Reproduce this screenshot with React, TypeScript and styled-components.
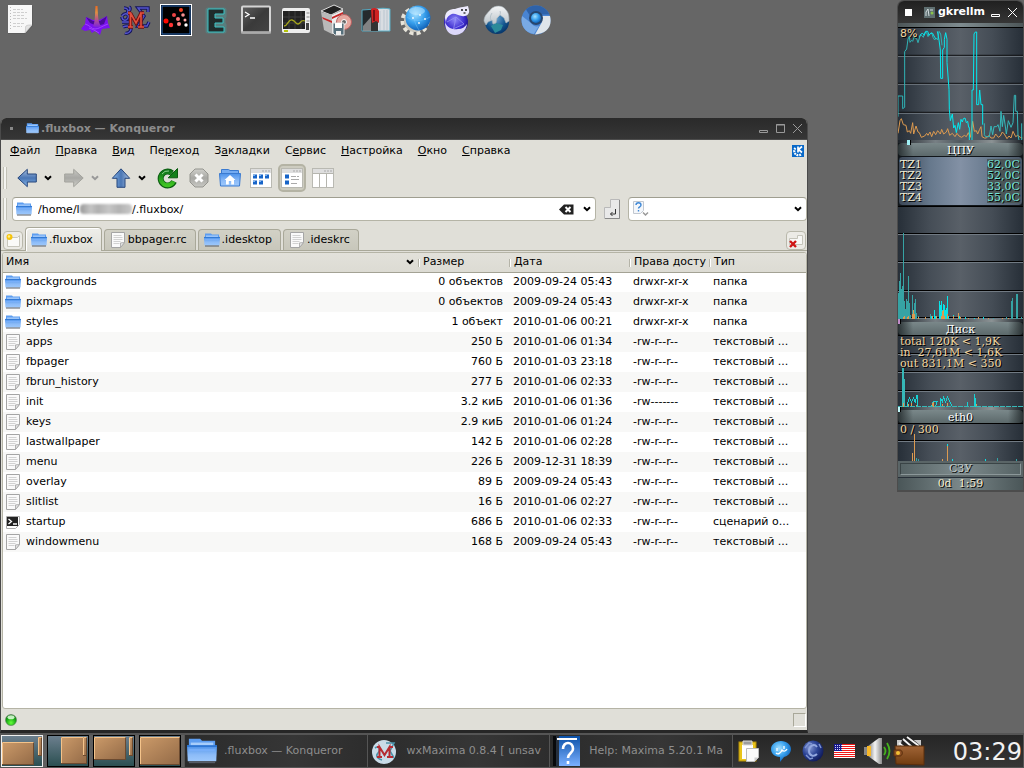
import React from 'react';
import styled, { createGlobalStyle } from 'styled-components';

const sans = '"DejaVu Sans", "Liberation Sans", sans-serif';
const serif = '"DejaVu Serif", "Liberation Serif", serif';

const GlobalStyle = createGlobalStyle`
  * { box-sizing: border-box; }
  body {
    margin: 0;
    background: #666;
    font: 11px/14px ${sans};
    color: #000;
    overflow: hidden;
  }
  button, input { font: inherit; color: inherit; }
  button { border: 0; padding: 0; margin: 0; background: none; }
  svg { display: block; flex: none; }
`;

/* ---------- desktop ---------- */

const Desktop = styled.div`
  position: relative;
  display: flex;
  flex-direction: column;
  justify-content: space-between;
  min-height: 100vh;
`;
const IconBar = styled.nav`
  display: flex;
  gap: 44px;
  padding: 4px;
`;
const IconGroup = styled.div`
  display: flex;
  gap: 8px;
`;
const DesktopButton = styled.button`
  width: 32px;
  height: 32px;
`;

/* ---------- file manager window ---------- */

const Window = styled.main`
  position: absolute;
  left: 0;
  top: 118px;
  right: 216px;
  bottom: 35px;
  display: flex;
  flex-direction: column;
  background: #e0dfd8;
  border: solid #4a4a4a;
  border-width: 0 1px 0 1px;
  border-bottom: 3px solid #262626;
  border-radius: 6px 6px 0 0;
  overflow: hidden;
`;
const TitleBar = styled.header`
  display: flex;
  align-items: center;
  height: 22px;
  padding: 0 1px 0 9px;
  background: linear-gradient(#2a2a2a, #363636);
  border-bottom: 1px solid #4c4c4c;
  color: #8c8c8c;
  font-weight: bold;
`;
const TitleDot = styled.span`
  width: 3px;
  height: 3px;
  margin-right: 13px;
  background: #888;
`;
const TitleText = styled.h1`
  flex: 1;
  margin: 0;
  padding-left: 2px;
  font-size: 11px;
  white-space: nowrap;
`;
const TitleButton = styled.button`
  display: flex;
  justify-content: center;
  width: 17px;
`;
const MenuBar = styled.nav`
  display: flex;
  align-items: center;
  gap: 1px;
  height: 21px;
  padding: 0 3px 0 2px;
`;
const MenuItem = styled.button`
  padding: 0 7px;
  white-space: nowrap;
`;
const Spacer = styled.span`
  flex: 1;
`;
const ToolBar = styled.div`
  display: flex;
  align-items: center;
  gap: 3px;
  height: 34px;
  padding-left: 2px;
`;
const Handle = styled.span<{ $h: number }>`
  width: 4px;
  height: ${p => p.$h}px;
  margin-right: 5px;
  border: solid #c2c1b6;
  border-width: 0 1px;
  background: #f4f4f0;
`;
const SplitTools = styled.div`
  display: flex;
  gap: 5px;
`;
const SplitTool = styled.div`
  display: flex;
`;
const ToolButton = styled.button<{ $w: number; $pressed?: boolean }>`
  display: flex;
  align-items: center;
  justify-content: center;
  width: ${p => p.$w}px;
  height: 28px;
  border-radius: 5px;
  border: ${p => (p.$pressed ? '2px solid #b4b3a4' : '0')};
  background: ${p => (p.$pressed ? '#cdccc0' : 'transparent')};
`;
const LocationBar = styled.div`
  display: flex;
  align-items: center;
  gap: 8px;
  height: 30px;
  padding: 0 0 2px 2px;
`;
const Field = styled.div<{ $w?: number }>`
  position: relative;
  display: flex;
  align-items: center;
  flex: ${p => (p.$w ? `0 0 ${p.$w}px` : '1')};
  min-width: 0;
  height: 24px;
  padding: 0 3px;
  background: #fff;
  border: 1px solid #b5b4a6;
  border-top-color: #9f9e90;
  border-radius: 4px;
`;
const LocationField = styled(Field)`
  margin-left: -8px;
`;
const TextInput = styled.input`
  flex: 1;
  width: 0;
  min-width: 0;
  height: 16px;
  padding: 0 0 0 6px;
  border: 0;
  outline: 0;
  background: none;
`;
const Smudge = styled.span`
  position: absolute;
  left: 67px;
  top: 6px;
  width: 52px;
  height: 10px;
  border-radius: 4px;
  background: linear-gradient(90deg, #999, #c4c4c4 20%, #b0b0b0 35%, #c6c6c6 55%, #b2b2b2 75%, #c8c8c8);
  filter: blur(1px);
`;
const FieldButton = styled.button`
  display: flex;
  align-items: center;
  justify-content: center;
  width: 20px;
  height: 18px;
`;
const DropButton = styled(FieldButton)`
  width: 10px;
  margin-left: 6px;
`;
const TabStrip = styled.div`
  display: flex;
  align-items: flex-end;
  gap: 2px;
  height: 26px;
  padding: 0 1px 0 2px;
  border-bottom: 1px solid #a9a899;
`;
const CornerButton = styled.button`
  display: flex;
  align-items: center;
  justify-content: center;
  width: 20px;
  height: 19px;
  border: 1px solid #b9b8ab;
  border-radius: 4px;
  background: #ecebe6;
`;
const Tab = styled.button<{ $active?: boolean }>`
  display: flex;
  align-items: center;
  gap: 2px;
  height: ${p => (p.$active ? 24 : 21)}px;
  margin-bottom: ${p => (p.$active ? -1 : 0)}px;
  padding: 0 8px 0 5px;
  border: 1px solid #a9a899;
  border-bottom: 0;
  border-radius: 4px 4px 0 0;
  background: ${p => (p.$active ? 'linear-gradient(#eeeeea, #e0dfd8)' : 'linear-gradient(#d2d1c6, #c8c7bb)')};
  box-shadow: ${p => (p.$active ? 'inset 1px 1px 0 #fff' : 'none')};
  white-space: nowrap;
`;
const ListFrame = styled.section`
  flex: 1;
  min-height: 0;
  margin: 1px 0 0 1px;
  overflow: hidden;
  background: #fff;
  border: 1px solid #b5b4a6;
  border-radius: 3px;
`;
const FileTable = styled.table`
  width: 100%;
  table-layout: fixed;
  border-collapse: collapse;
`;
const HeadCell = styled.th`
  position: relative;
  height: 19px;
  padding: 0 0 0 5px;
  background: linear-gradient(#e2e1da, #dcdbd3);
  border-bottom: 1px solid #a3a294;
  font-weight: normal;
  text-align: left;
  white-space: nowrap;
  & + &::before {
    content: '';
    position: absolute;
    left: 0;
    top: 6px;
    height: 8px;
    border-left: 1px solid #b5b4a8;
    border-right: 1px solid #fff;
  }
`;
const FirstHead = styled(HeadCell)`
  padding-left: 3px;
`;
const HeadInner = styled.div`
  display: flex;
  align-items: center;
  justify-content: space-between;
  padding-right: 4px;
`;
const Row = styled.tr`
  height: 20px;
  &:nth-child(even) { background: #f8f8f7; }
`;
const Cell = styled.td<{ $right?: boolean }>`
  padding: 0 ${p => (p.$right ? 6 : 0)}px 0 4px;
  text-align: ${p => (p.$right ? 'right' : 'left')};
  white-space: nowrap;
`;
const NameCell = styled(Cell)`
  padding-left: 2px;
`;
const FileName = styled.div`
  display: flex;
  align-items: center;
  gap: 5px;
`;
const StatusBar = styled.footer`
  display: flex;
  align-items: center;
  justify-content: space-between;
  height: 21px;
  padding: 0 1px 0 4px;
`;
const Grip = styled.span`
  width: 13px;
  height: 14px;
  border: 1px solid;
  border-color: #a9a899 #fff #fff #a9a899;
`;

/* ---------- system monitor ---------- */

const Monitor = styled.aside`
  position: absolute;
  right: 0;
  top: 0;
  width: 127px;
  border: solid #4c4c4c;
  border-width: 1px 1px 2px 1px;
  border-radius: 7px 7px 0 0;
  overflow: hidden;
  font: 11px/11px ${serif};
  color: #f0f0f0;
`;
const MonitorTitle = styled.header`
  display: flex;
  align-items: center;
  height: 22px;
  padding: 0 2px 0 7px;
  background: linear-gradient(#202020, #363636);
  font: bold 11px/14px ${sans};
  color: #fff;
`;
const MonitorName = styled.span`
  flex: 1;
  padding-left: 3px;
`;
const WhiteSquare = styled.span`
  width: 7px;
  height: 7px;
  margin-right: 12px;
  background: #fff;
`;
const Band = styled.div`
  height: 4px;
  background: linear-gradient(90deg, #4d5658, #7f8c90, #4d5658);
`;
const ChartBox = styled.div<{ $h: number }>`
  position: relative;
  height: ${p => p.$h}px;
  overflow: hidden;
  border-top: 1px solid #000;
  background: linear-gradient(90deg, #272f38, #454d56 25%, #596068 50%, #454d56 75%, #272f38);
`;
const ChartText = styled.div`
  position: absolute;
  left: 2px;
  top: 0;
  color: #f3d6a0;
  text-shadow: 1px 1px 0 #000;
  white-space: pre;
`;
const CpuText = styled(ChartText)`
  font-family: ${sans};
`;
const Krell = styled.div<{ $mark: string; $at: number }>`
  position: relative;
  height: 3px;
  background: linear-gradient(90deg, #1d2228, #777f84 30%, #50585e 50%, #8b9294 75%, #1d2228);
  &::after {
    content: '';
    position: absolute;
    left: ${p => p.$at}px;
    top: 0;
    width: 3px;
    height: 5px;
    background: ${p => p.$mark};
    border-right: 1px solid #000;
    z-index: 1;
  }
`;
const Label = styled.div`
  height: 13px;
  padding-top: 2px;
  border-radius: 4px;
  background: linear-gradient(90deg, #2b3335, transparent 12%, transparent 88%, #2b3335), linear-gradient(#7a888a, #5c696b);
  text-align: center;
  text-shadow: 1px 1px 0 #000;
  color: #fff;
`;
const LabelRow = styled.div`
  background: #11161a;
`;
const Sensors = styled.dl`
  display: grid;
  grid-template-columns: 1fr auto;
  margin: 0;
  height: 50px;
  padding: 2px 2px 2px 1px;
  border: 1px solid #11161a;
  border-radius: 4px;
  background: linear-gradient(90deg, #3c4756, #66788c 25%, #8391a5 50%, #66788c 75%, #4b5766);
  text-shadow: 1px 1px 0 #000;
`;
const SensorName = styled.dt`
  color: #f1ecd3;
`;
const SensorValue = styled.dd`
  margin: 0;
  background: #4a5556;
  color: #72e6dc;
`;
const MemBox = styled.div`
  padding: 2px;
  background: #5a6567;
  border-bottom: 1px solid #272f38;
`;
const MemLabel = styled.div`
  height: 12px;
  border: 1px solid;
  border-color: #3a4446 #8b9799 #8b9799 #3a4446;
  background: linear-gradient(90deg, #566365, #7e8b8d, #566365);
  text-align: center;
  line-height: 10px;
  color: #c2cdcd;
  text-shadow: 1px 1px 0 #000;
`;
const Uptime = styled.div`
  height: 12px;
  background: linear-gradient(90deg, #4a5658, #7a8789 50%, #4a5658);
  text-align: center;
  color: #f3ead0;
  text-shadow: 1px 1px 0 #000;
  white-space: pre;
`;

/* ---------- task bar ---------- */

const TaskBar = styled.footer`
  display: flex;
  height: 35px;
  border: solid #555;
  border-width: 2px 1px 1px 1px;
  background: #2f2f2f;
`;
const Pager = styled.div`
  display: flex;
  gap: 4px;
  padding-right: 3px;
  background: #606060;
`;
const PagerButton = styled.button<{ $current?: boolean }>`
  width: 42px;
  height: 32px;
  border: 1px solid ${p => (p.$current ? '#f0f0f0' : '#000')};
  background: linear-gradient(#6c7f8e, #2b4f51);
`;
const Tasks = styled.div`
  display: flex;
  flex: 1;
  min-width: 0;
`;
const Task = styled.button`
  display: flex;
  align-items: center;
  flex: 1;
  min-width: 0;
  padding: 0 7px 0 2px;
  gap: 7px;
  border-left: 1px solid #555;
  background: linear-gradient(90deg, #2b2b2b, #363636 60%, #2d2d2d);
  color: #8e8e8e;
`;
const TaskText = styled.span`
  white-space: nowrap;
`;
const Tray = styled.div`
  display: flex;
  align-items: center;
  border-left: 1px solid #555;
  background: linear-gradient(#262626, #363636);
`;
const TrayButton = styled.button`
  display: flex;
  align-items: center;
  justify-content: center;
  width: 32px;
  height: 32px;
`;
const Clock = styled.time`
  padding: 2px 1px 0 28px;
  font-size: 24px;
  line-height: 30px;
  color: #f2f2f2;
`;

/* ---------- shared gradients ---------- */

const HiddenSvg = styled.svg`
  position: absolute;
`;
const Defs = () => (
  <HiddenSvg width="0" height="0" aria-hidden="true">
    <defs>
      <linearGradient id="folder" x1="0" y1="0" x2="0" y2="1"><stop offset="0" stopColor="#4c92ea" /><stop offset=".6" stopColor="#8dbcf8" /><stop offset="1" stopColor="#9cc8fc" /></linearGradient>
      <linearGradient id="arrow" x1="0" y1="0" x2="0" y2="1"><stop offset="0" stopColor="#a7bfdf" /><stop offset=".5" stopColor="#4a76b4" /><stop offset="1" stopColor="#86b6ea" /></linearGradient>
      <linearGradient id="grayArrow" x1="0" y1="0" x2="0" y2="1"><stop offset="0" stopColor="#cfcfca" /><stop offset=".5" stopColor="#a8a8a4" /><stop offset="1" stopColor="#c8c8c3" /></linearGradient>
      <linearGradient id="green" x1="0" y1="0" x2="0" y2="1"><stop offset="0" stopColor="#10751a" /><stop offset="1" stopColor="#3fc422" /></linearGradient>
      <linearGradient id="peak" x1="0" y1="0" x2="0" y2="1"><stop offset="0" stopColor="#f06a20" /><stop offset=".3" stopColor="#e09040" /><stop offset=".55" stopColor="#c0607a" /><stop offset="1" stopColor="#7a20e0" /></linearGradient>
      <linearGradient id="wood" x1="0" y1="0" x2="1" y2="1"><stop offset="0" stopColor="#cb9a69" /><stop offset="1" stopColor="#936a47" /></linearGradient>
      <linearGradient id="wallet" x1="0" y1="0" x2="0" y2="1"><stop offset="0" stopColor="#a06436" /><stop offset="1" stopColor="#703c10" /></linearGradient>
      <linearGradient id="metal" x1="0" y1="0" x2="1" y2="0"><stop offset="0" stopColor="#7a7a7a" /><stop offset=".5" stopColor="#f4f4f4" /><stop offset="1" stopColor="#8c8c8c" /></linearGradient>
      <linearGradient id="help" x1="0" y1="0" x2="0" y2="1"><stop offset="0" stopColor="#0b51a8" /><stop offset="1" stopColor="#7ab0ff" /></linearGradient>
      <linearGradient id="screen" x1="0" y1="0" x2="1" y2="1"><stop offset="0" stopColor="#606060" /><stop offset=".5" stopColor="#3a3a3a" /><stop offset="1" stopColor="#444" /></linearGradient>
      <linearGradient id="fur" x1="0" y1="0" x2="0" y2="1"><stop offset="0" stopColor="#f4f5f6" /><stop offset="1" stopColor="#b8c2c8" /></linearGradient>
      <radialGradient id="sky" cx=".4" cy=".35" r=".7"><stop offset="0" stopColor="#a4e0ff" /><stop offset=".5" stopColor="#3aa2ee" /><stop offset="1" stopColor="#0b5cb4" /></radialGradient>
      <radialGradient id="violet" cx=".45" cy=".4" r=".65"><stop offset="0" stopColor="#8f88f8" /><stop offset=".6" stopColor="#3e2ed0" /><stop offset="1" stopColor="#160a78" /></radialGradient>
      <radialGradient id="earth" cx=".45" cy=".35" r=".7"><stop offset="0" stopColor="#6ba5d0" /><stop offset=".6" stopColor="#12558e" /><stop offset="1" stopColor="#052f62" /></radialGradient>
      <radialGradient id="navy" cx=".35" cy=".35" r=".75"><stop offset="0" stopColor="#8498d4" /><stop offset=".5" stopColor="#2a4294" /><stop offset="1" stopColor="#0c1450" /></radialGradient>
      <radialGradient id="led" cx=".5" cy=".75" r=".7"><stop offset="0" stopColor="#66ff3c" /><stop offset=".7" stopColor="#10a010" /><stop offset="1" stopColor="#087008" /></radialGradient>
    </defs>
  </HiddenSvg>
);

/* ---------- icons ---------- */

const Folder = ({ size = 16 }: { size?: number }) => (
  <svg width={size} height={size} viewBox="0 0 16 16">
    <path d="M1 1.500h6l1 1h7v5H1z" fill="#5d9df0" />
    <path d="M2 3.500h12v2H2z" fill="#a7cdfb" />
    <path d="M0 5h16l-.4 8.500H.4z" fill="url(#folder)" />
    <path d="M0 5.400h16" stroke="#2f77d4" />
    <path d="M1.200 7.500h13.600" stroke="#78affa" />
    <path d="M1 14h14" stroke="#565c66" />
  </svg>
);
const Page = () => (
  <svg width="16" height="16" viewBox="0 0 16 16">
    <path d="M1.500.5h13v10l-4 5h-9z" fill="#fafafa" stroke="#a5a5a5" />
    <path d="M3.500 3.500h8M3.500 5.500h9M3.500 7.500h9M3.500 9.500h7M3.500 11.500h6" stroke="#d2d2d2" />
    <path d="M14.500 10.500l-4 .4v4.600z" fill="#e4e4e4" stroke="#a5a5a5" strokeWidth=".8" />
  </svg>
);
const Document = () => (
  <svg width="32" height="32" viewBox="0 0 32 32">
    <path d="M4 2h25v20l-8 8H4z" fill="#4a4a4a" opacity=".35" />
    <path d="M4 1h24v20l-7 8H4z" fill="#f7f7f7" />
    <path d="M9 5.500h10M9 8.500h14M9 11.500h12M9 14.500h14M9 19.500h12M9 22.500h9" stroke="#cfcfcf" strokeDasharray="3 1" />
    <path d="M6.500 3v24" stroke="#bbb" strokeDasharray="1 2" />
    <path d="M28 21c-3 0-5 0-6 1s0 4-1 7z" fill="#e3e3e3" stroke="#bbb" strokeWidth=".6" />
  </svg>
);
const Script = () => (
  <svg width="16" height="16" viewBox="0 0 16 16">
    <path d="M1.500 2.500h13v8l-4 4h-9z" fill="#fff" stroke="#aaa" />
    <rect x="2" y="3" width="11" height="9" fill="#222" />
    <path d="M3.500 5l3 2.500-3 2.500M8 10h4" fill="none" stroke="#fff" strokeWidth="1.300" />
  </svg>
);
const Chevron = ({ color = '#000' }: { color?: string }) => (
  <svg width="8" height="6" viewBox="0 0 8 6"><path d="M1 1.200l3 3 3-3" fill="none" stroke={color} strokeWidth="2" /></svg>
);
const Arrow = ({ turn = 0, gray = false }: { turn?: number; gray?: boolean }) => (
  <svg width="20" height="20" viewBox="0 0 20 20">
    <path d="M.8 10L10.300 1.300V6h9v8h-9v4.700z" transform={`rotate(${turn} 10 10)`} fill={gray ? 'url(#grayArrow)' : 'url(#arrow)'} stroke={gray ? '#a2a29c' : '#27467c'} strokeLinejoin="round" />
  </svg>
);
const Reload = () => (
  <svg width="22" height="22" viewBox="0 0 22 22">
    <path d="M17 14.500a7 7 0 1 1-2-8.500" fill="none" stroke="#0a5c10" strokeWidth="6" />
    <path d="M20.500 1.500v9.300h-9.300z" fill="#12801a" stroke="#0a5c10" />
    <path d="M16.600 14.300a6.800 6.800 0 1 1-1.600-8" fill="none" stroke="url(#green)" strokeWidth="4.200" />
    <path d="M5 7a7 7 0 0 1 7-3" fill="none" stroke="#8fd48c" strokeWidth="1" />
  </svg>
);
const Stop = () => (
  <svg width="20" height="20" viewBox="0 0 20 20">
    <path d="M6 1h8l5 5v8l-5 5H6l-5-5V6z" fill="url(#grayArrow)" stroke="#95958f" />
    <path d="M6.500 6.500l7 7m0-7l-7 7" stroke="#fff" strokeWidth="3" />
  </svg>
);
const Home = () => (
  <svg width="22" height="20" viewBox="0 0 22 20">
    <path d="M2.500 1.500h7l1.500 1h8.500V9h-17z" fill="#74abf1" stroke="#3a7ad0" />
    <path d="M.5 5.500h21L20.500 18h-19z" fill="url(#folder)" stroke="#3a7ad0" />
    <path d="M11 7l5.500 5H15v4.500h-2.800V13H9.800v3.500H7V12H5.500z" fill="#fff" />
  </svg>
);
const ViewIcon = ({ kind }: { kind: 'icons' | 'tree' | 'columns' }) => (
  <svg width="22" height="20" viewBox="0 0 22 20">
    <rect x=".5" y=".5" width="21" height="19" fill="#fff" stroke="#b9b9b2" />
    <path d="M1 3h20" stroke="#dedede" strokeWidth="4" />
    <path d="M12 3h2m1 0h2m1 0h2" stroke="#aaa" />
    {kind === 'icons' && <path d="M3 8.500h4m2 0h4m2 0h4M3 14.500h4m2 0h4" stroke="#1764c8" strokeWidth="4" />}
    {kind === 'icons' && <path d="M3 7.500h2m4 0h2m4 0h2M3 13.500h2m4 0h2" stroke="#7ab3f2" />}
    {kind === 'tree' && <path d="M4 8.500h4M4 14.500h4" stroke="#1764c8" strokeWidth="4" />}
    {kind === 'tree' && <path d="M10 8.500h5m1 0h2M10 11.500h8M10 15.500h6" stroke="#aaa" />}
    {kind === 'columns' && <path d="M7.500 5v14M14.500 5v14M1 5.500h20" stroke="#b5b5ae" />}
  </svg>
);
const ClearIcon = () => (
  <svg width="15" height="11" viewBox="0 0 15 11">
    <path d="M0 5.500L5 .5h9.500v10H5z" fill="#222" />
    <path d="M6.500 3l5 5m0-5l-5 5" stroke="#fff" strokeWidth="2" />
  </svg>
);
const GoIcon = () => (
  <svg width="16" height="20" viewBox="0 0 16 20">
    <path d="M6.500.5h9v19H.5v-11h6z" fill="#e9e9e9" stroke="#b9b9b9" />
    <path d="M15.500 1v18.500H1" fill="none" stroke="#888" />
    <path d="M11.500 10v5h-5M8.500 13l-2 2 2 2" fill="none" stroke="#333" />
  </svg>
);
const QueryIcon = () => (
  <svg width="17" height="16" viewBox="0 0 17 16">
    <path d="M1.500.5h10v9l-3 3h-7z" fill="#f4f7fb" stroke="#c2c8d0" />
    <path d="M4 4c0-3 5-3 5 0 0 2-2.500 1.700-2.500 3.500M6.500 9v1.500" fill="none" stroke="#3f88d6" strokeWidth="1.400" />
    <path d="M11 11.500l2.500 2.500 2.500-2.500" fill="none" stroke="#999" strokeWidth="1.500" />
  </svg>
);
const KdeIcon = () => (
  <svg width="12" height="12" viewBox="0 0 12 12">
    <rect width="12" height="12" fill="#0868c8" />
    <path d="M3.500 3a4 4 0 0 0 6 6" fill="none" stroke="#fff" strokeWidth="2.200" strokeDasharray="1.800 .8" />
    <path d="M6 1.500v6M10 1.500L6.500 4.500 10 7.500" fill="none" stroke="#fff" strokeWidth="1.700" />
  </svg>
);
const NewTabIcon = () => (
  <svg width="16" height="15" viewBox="0 0 16 15">
    <path d="M2.500 4.500h10l2-2v11h-12z" fill="#fafaf8" stroke="#c8c7bd" />
    <circle cx="4.500" cy="4" r="3" fill="#f6c40c" /><circle cx="4" cy="3.500" r="1.200" fill="#fff08a" />
  </svg>
);
const CloseTabIcon = () => (
  <svg width="16" height="15" viewBox="0 0 16 15">
    <path d="M1.500 5.500h8v-3h5v9h-13z" fill="#f8f8f6" stroke="#c5c4ba" />
    <path d="M2 8l6 6m0-6l-6 6" stroke="#cf1515" strokeWidth="2.400" />
  </svg>
);
const Minimize = ({ color = '#999' }: { color?: string }) => (
  <svg width="11" height="11" viewBox="0 0 11 11"><path d="M1.500 7.500h8v2h-8z" fill="none" stroke={color} /></svg>
);
const Maximize = () => (
  <svg width="11" height="11" viewBox="0 0 11 11"><path d="M1.500 1.500h8v8h-8zM1 2h9" fill="none" stroke="#999" /></svg>
);
const Cross = ({ color = '#999' }: { color?: string }) => (
  <svg width="11" height="11" viewBox="0 0 11 11"><path d="M1 1l9 9m0-9l-9 9" stroke={color} /></svg>
);
const Led = () => (
  <svg width="12" height="12" viewBox="0 0 12 12">
    <circle cx="6" cy="6" r="5.500" fill="url(#led)" stroke="#5a7a5a" strokeWidth=".6" />
    <ellipse cx="6" cy="3.200" rx="3.500" ry="2" fill="#e4ffe0" opacity=".85" />
  </svg>
);

const Art = ({ children }: { children: React.ReactNode }) => (
  <svg width="32" height="32" viewBox="0 0 32 32">{children}</svg>
);
const desktopIcons: { name: string; art: React.ReactNode }[] = [
  { name: 'Surface plot', art: <>
    <path d="M1 25l4-5 1-7 7 3h6l8-4 1 7 2 5-8 1-2 6-5-4-3 2-2-3-5 1z" fill="#7a12f0" />
    <path d="M6 13l7 4h7l7-5-3 8-7 2-7-3z" fill="#4a0a9c" />
    <path d="M13 22c2-3 2-12 2.500-20h2c.500 8 .500 17 3.500 20-3 2-5 2-8 0z" fill="url(#peak)" />
    <path d="M5 20c5 1 6 5 10 5s7-3 13-5M9 24l5 2 5 3" fill="none" stroke="#a040ff" />
  </> },
  { name: 'Maxima', art: <>
    <path d="M4 4c4 0 5 3 3 5M9 3c2 1 1 4-1 5M2 12c3-4 8-2 6 2s-6 2-6-1M2 18h9M3 23c4-2 8-1 8 2s-4 5-6 4M28 8V4H18l6 8-6 10h9l2-4" fill="none" stroke="#15155f" strokeWidth="3.400" />
    <path d="M4 4c4 0 5 3 3 5M9 3c2 1 1 4-1 5M2 12c3-4 8-2 6 2s-6 2-6-1M2 18h9M3 23c4-2 8-1 8 2s-4 5-6 4M28 8V4H18l6 8-6 10h9l2-4" fill="none" stroke="#5656cc" strokeWidth="1.400" />
    <path d="M8 23h5M10.500 23V9l5.500 10 5-10v14M18 23h6M8 9h3M20 9h4" fill="none" stroke="#701010" strokeWidth="3.400" />
    <path d="M8 23h5M10.500 23V9l5.500 10 5-10v14M18 23h6M8 9h3M20 9h4" fill="none" stroke="#e2503e" strokeWidth="1.600" />
  </> },
  { name: 'Scatter plot', art: <>
    <rect x=".5" y=".5" width="31" height="31" fill="#000" stroke="#fff" />
    <rect x="2" y="2" width="28" height="28" fill="#000" stroke="#2f6fc0" />
    <circle cx="6" cy="17" r="2.500" fill="#ff0800" /><circle cx="11" cy="21" r="2.200" fill="#f33" /><circle cx="14" cy="11" r="2" fill="#e44" /><circle cx="18" cy="15" r="2" fill="#f77" /><circle cx="19" cy="20" r="2" fill="#f88" /><circle cx="21" cy="6" r="2" fill="#f74020" /><circle cx="23" cy="11" r="1.800" fill="#f89090" /><circle cx="25" cy="16" r="1.500" fill="#faa" /><circle cx="26" cy="21" r="1.700" fill="#fff" />
  </> },
  { name: 'Emacs', art: <>
    <path d="M8 6h16v6H15v2h8v5h-8v2h9v6H8z" fill="#38aeb0" stroke="#38b6b8" strokeWidth="5" opacity=".3" strokeLinejoin="round" />
    <path d="M8 5h16v5H15v4h8v5h-8v4h9v5H8z" fill="#202a2a" stroke="#3bc4c6" strokeWidth="1" />
  </> },
  { name: 'Terminal', art: <>
    <rect x="2" y="2.500" width="28" height="26" rx="1" fill="url(#screen)" stroke="#d4d4d4" strokeWidth="2" />
    <path d="M1 28.500h30" stroke="#aaa" strokeWidth="2" />
    <path d="M5 8l4 2.500L5 13M10 14h5" fill="none" stroke="#fff" strokeWidth="1.300" />
  </> },
  { name: 'System monitor', art: <>
    <rect x="2" y="4" width="28" height="25" rx="2" fill="#ededed" />
    <rect x="3" y="7" width="22" height="18" fill="#222" />
    <path d="M3 13h22M3 19h22M9 7v18M15 7v18M21 7v18" stroke="#3d3d3d" />
    <path d="M4 22c4 0 4-7 8-6s3 4 6 4 2-5 7-3" fill="none" stroke="#a5a51c" strokeWidth="1.300" />
    <path d="M4 27h4" stroke="#b5c40a" strokeWidth="2" /><path d="M26.500 9h3m-3 4h3m-3 4h3" stroke="#888" /><rect x="26" y="19" width="3" height="7" fill="#444" />
  </> },
  { name: 'Package manager', art: <>
    <path d="M1 7l13-6 9 4-12 6z" fill="#222" stroke="#ddd" /><path d="M1 8l3 18 8 4 1-19z" fill="#b9b9b9" />
    <path d="M12 11l11-5v18l-11 6z" fill="#eee" /><path d="M2 13l10 4v2L3 15zM12 13l11-5v2l-11 5z" fill="#c82525" />
    <circle cx="24" cy="18" r="7.500" fill="#e6a8a0" stroke="#b86060" /><circle cx="24" cy="18" r="2.500" fill="#666" stroke="#fff" />
    <path d="M13 19h11v12H15l-2-2z" fill="#56707c" stroke="#ddd" /><rect x="15" y="19" width="7" height="5" fill="#fff" /><rect x="16" y="27" width="5" height="4" fill="#eee" />
  </> },
  { name: 'Dictionary', art: <>
    <path d="M2 6l14-1v22H2z" fill="#252a2d" stroke="#56a8c0" /><path d="M16 5c5-1 9-1 14 0v22H16z" fill="#d9dde2" stroke="#5ab0c8" />
    <path d="M11 5h7v22h-7z" fill="#333" /><path d="M11 5c3-2 7-1 8 2v12l-3-2-4 2z" fill="#d02222" /><path d="M14 6v11" stroke="#7c1014" strokeWidth="2" /><path d="M3 22l8-9v14H3z" fill="#999" opacity=".8" /><path d="M20 7v19M24 6v20M27 6v20" stroke="#b9c5cf" />
  </> },
  { name: 'Konqueror', art: <>
    <circle cx="15" cy="17" r="12.500" fill="none" stroke="#e7e4da" strokeWidth="4" strokeDasharray="4 3" /><circle cx="15" cy="17" r="11" fill="#cbc8bd" />
    <circle cx="18" cy="14" r="12.500" fill="url(#sky)" /><path d="M7 13c5 4 15 5 23 0M16 2c-4 8-2 17 3 24" fill="none" stroke="#7ecbff" strokeWidth=".5" opacity=".8" />
    <ellipse cx="17" cy="7" rx="8" ry="4" fill="#c8ecff" opacity=".5" /><circle cx="13" cy="14" r=".9" fill="#fff" /><circle cx="20" cy="11" r=".9" fill="#fff" /><circle cx="19" cy="19" r=".9" fill="#fff" /><circle cx="25" cy="15" r=".9" fill="#fff" />
  </> },
  { name: 'Iceweasel', art: <>
    <circle cx="16" cy="18" r="12" fill="url(#violet)" /><path d="M7 18l9-5 8 7M13 28l3-15M24 20l-11 5" fill="none" stroke="#9d9af4" strokeWidth=".7" />
    <path d="M5 14c0-7 5-9 10-9 3-1 5-2 8-2l5-1 1 4c1 4-3 7-7 6-5-1-8-4-12-1-3 2-4 4-4 8z" fill="#eceafc" />
    <path d="M5 18c2 6 8 8 13 7 4 0 7-2 9-5-1 7-6 11-12 11S5 26 5 18z" fill="#dcd8fa" />
    <circle cx="22" cy="6" r=".9" /><circle cx="26" cy="6" r=".9" /><path d="M23.500 9h2" stroke="#222" strokeWidth="1.300" />
  </> },
  { name: 'Web browser', art: <>
    <circle cx="17" cy="18" r="12" fill="url(#earth)" /><path d="M11 22l5-3 7 2-2 5-6 3z" fill="#2b8a9a" />
    <path d="M4 17c0-6 5-9 7-12 4-4 12-4 15 1 3 3 3 7 3 11l-3 2-2-5-4-3-3 3-1 5-3 1-1-4-4 2-2 3z" fill="url(#fur)" stroke="#a8b3ba" strokeWidth=".6" />
    <path d="M12 9c-2 3-2 5-1 8M20 7c1 3 0 4-3 7" stroke="#b6c2ca" fill="none" />
  </> },
  { name: 'Chromium', art: <>
    <circle cx="16" cy="16" r="14.500" fill="#4984d2" /><path d="M16 1.500a14.500 14.500 0 0 1 13.500 9H16a6 6 0 0 0-5 3L6 5.500a14 14 0 0 1 10-4z" fill="#2e62a9" />
    <path d="M30 12c3 12-5 18-15 18.500L22 18l-1-6z" fill="#dfe5ea" /><path d="M2 12l9 7c2 3 5 4 8 3l-5 8C5 29 0 21 2 12z" fill="#79aae5" />
    <circle cx="16" cy="14" r="7" fill="#27466e" /><circle cx="16" cy="14" r="5" fill="url(#sky)" />
  </> },
];

/* ---------- data ---------- */

const files: [string, 'dir' | 'page' | 'script', string, string, string, string][] = [
  ['backgrounds', 'dir', '0 объектов', '2009-09-24 05:43', 'drwxr-xr-x', 'папка'],
  ['pixmaps', 'dir', '0 объектов', '2009-09-24 05:43', 'drwxr-xr-x', 'папка'],
  ['styles', 'dir', '1 объект', '2010-01-06 00:21', 'drwxr-xr-x', 'папка'],
  ['apps', 'page', '250 Б', '2010-01-06 01:34', '-rw-r--r--', 'текстовый ...'],
  ['fbpager', 'page', '760 Б', '2010-01-03 23:18', '-rw-r--r--', 'текстовый ...'],
  ['fbrun_history', 'page', '277 Б', '2010-01-06 02:33', '-rw-r--r--', 'текстовый ...'],
  ['init', 'page', '3.2 киБ', '2010-01-06 01:36', '-rw-------', 'текстовый ...'],
  ['keys', 'page', '2.9 киБ', '2010-01-06 01:24', '-rw-r--r--', 'текстовый ...'],
  ['lastwallpaper', 'page', '142 Б', '2010-01-06 02:28', '-rw-r--r--', 'текстовый ...'],
  ['menu', 'page', '226 Б', '2009-12-31 18:39', '-rw-r--r--', 'текстовый ...'],
  ['overlay', 'page', '89 Б', '2009-09-24 05:43', '-rw-r--r--', 'текстовый ...'],
  ['slitlist', 'page', '16 Б', '2010-01-06 02:27', '-rw-r--r--', 'текстовый ...'],
  ['startup', 'script', '686 Б', '2010-01-06 02:33', '-rw-r--r--', 'сценарий о...'],
  ['windowmenu', 'page', '168 Б', '2009-09-24 05:43', '-rw-r--r--', 'текстовый ...'],
];
const fileIcon = { dir: <Folder />, page: <Page />, script: <Script /> };

const menus: [string, string, string][] = [
  ['', 'Ф', 'айл'], ['', 'П', 'равка'], ['', 'В', 'ид'], ['Пе', 'р', 'еход'], ['З', 'а', 'кладки'],
  ['С', 'е', 'рвис'], ['', 'Н', 'астройка'], ['', 'О', 'кно'], ['', 'С', 'правка'],
];

const sensors = [['TZ1', '62,0C'], ['TZ2', '52,0C'], ['TZ3', '33,0C'], ['TZ4', '55,0C']];

/* [x, height] pairs in chart pixels */
type Bars = [number, number][];
const diskCyan: Bars = [[0, 26], [1, 38], [2, 46], [3, 30], [4, 33], [5, 86], [6, 18], [7, 10], [8, 20], [9, 18], [10, 43], [11, 16], [12, 4], [14, 24], [15, 8], [16, 16], [17, 20], [18, 6], [20, 3], [27, 2], [32, 5], [33, 3], [36, 9], [37, 3], [41, 18], [42, 14], [43, 18], [44, 9], [45, 15], [46, 14], [47, 9], [48, 11], [49, 23], [50, 3], [55, 4], [60, 5], [61, 3], [67, 2], [76, 1], [85, 2], [95, 1], [108, 2], [113, 18], [114, 21], [118, 25], [119, 25], [123, 2]];
const diskOrange: Bars = [[5, 2], [6, 3], [9, 2], [10, 3], [14, 5], [15, 9], [16, 5], [20, 2], [27, 2], [34, 3], [38, 3], [43, 3], [44, 8], [45, 9], [46, 3], [49, 5], [55, 3], [60, 6], [62, 2], [70, 1], [80, 2], [90, 1], [104, 1], [110, 1]];
const netOrange: Bars = [[5, 4], [10, 3], [13, 4], [18, 2], [34, 4], [35, 5], [44, 3], [49, 4], [78, 3], [85, 1], [114, 1]];
const memOrange: Bars = [[14, 8], [16, 27], [44, 2], [49, 15]];
const memCyan: Bars = [[18, 3], [20, 2], [49, 17], [54, 2], [87, 2], [99, 3], [118, 2]];

const barPath = (bars: Bars, h: number) => bars.map(([x, v]) => `M${x + 0.5} ${h}v${-v}`).join('');
const Chart = ({ h, lines, children }: { h: number; lines: number[]; children: React.ReactNode }) => (
  <svg width="100%" height={h} viewBox={`0 0 125 ${h}`} preserveAspectRatio="none" shapeRendering="crispEdges">
    <path d={lines.map(y => `M0 ${y + 0.5}h125`).join('')} stroke="#000" />
    <path d={lines.map(y => `M0 ${y + 1.5}h125`).join('')} stroke="#717a83" />
    {children}
  </svg>
);
const BarSet = ({ cyan, orange, h }: { cyan: Bars; orange: Bars; h: number }) => (
  <>
    <path d={barPath(cyan, h)} stroke="#36a3a4" />
    <path d={barPath(cyan.filter(([x]) => x > 32 && x < 95), h)} stroke="#08e4e8" />
    <path d={barPath(orange, h)} stroke="#dc9a50" />
  </>
);

const pagerWindows = [
  [[0, 6, 31, 22], [36, 1, 3, 18]],
  [[13, 1, 25, 26], [35, 1, 3, 18]],
  [[0, 1, 31, 22], [35, 1, 3, 18]],
  [[0, 1, 39, 27]],
];

/* ---------- screens ---------- */

const FileManager = () => (
  <Window>
    <TitleBar>
      <TitleDot />
      <Folder size={13} />
      <TitleText>.fluxbox — Konqueror</TitleText>
      <TitleButton aria-label="Свернуть"><Minimize /></TitleButton>
      <TitleButton aria-label="Развернуть"><Maximize /></TitleButton>
      <TitleButton aria-label="Закрыть"><Cross /></TitleButton>
    </TitleBar>
    <MenuBar>
      {menus.map(([a, key, b]) => <MenuItem key={a + key + b}>{a}<u>{key}</u>{b}</MenuItem>)}
      <Spacer />
      <KdeIcon />
    </MenuBar>
    <ToolBar>
      <Handle $h={22} />
      <SplitTools>
        <SplitTool>
          <ToolButton $w={24} aria-label="Назад"><Arrow /></ToolButton>
          <ToolButton $w={18} aria-label="История назад"><Chevron /></ToolButton>
        </SplitTool>
        <SplitTool>
          <ToolButton $w={24} aria-label="Вперёд"><Arrow turn={180} gray /></ToolButton>
          <ToolButton $w={18} aria-label="История вперёд"><Chevron color="#999" /></ToolButton>
        </SplitTool>
        <SplitTool>
          <ToolButton $w={24} aria-label="Вверх"><Arrow turn={90} /></ToolButton>
          <ToolButton $w={18} aria-label="Родительские папки"><Chevron /></ToolButton>
        </SplitTool>
      </SplitTools>
      <ToolButton $w={28} aria-label="Обновить"><Reload /></ToolButton>
      <ToolButton $w={28} aria-label="Остановить"><Stop /></ToolButton>
      <ToolButton $w={28} aria-label="Домой"><Home /></ToolButton>
      <ToolButton $w={28} aria-label="Значки"><ViewIcon kind="icons" /></ToolButton>
      <ToolButton $w={28} $pressed aria-label="Таблица"><ViewIcon kind="tree" /></ToolButton>
      <ToolButton $w={28} aria-label="Столбцы"><ViewIcon kind="columns" /></ToolButton>
    </ToolBar>
    <LocationBar>
      <Handle $h={22} />
      <LocationField>
        <Folder />
        <TextInput aria-label="Адрес" defaultValue={`/home/l${'\u00a0'.repeat(15)}/.fluxbox/`} />
        <Smudge />
        <FieldButton aria-label="Очистить"><ClearIcon /></FieldButton>
        <DropButton aria-label="Список адресов"><Chevron /></DropButton>
      </LocationField>
      <button aria-label="Перейти"><GoIcon /></button>
      <Field $w={179}>
        <QueryIcon />
        <TextInput aria-label="Поиск" />
        <DropButton aria-label="Список запросов"><Chevron /></DropButton>
      </Field>
    </LocationBar>
    <TabStrip>
      <CornerButton aria-label="Новая вкладка"><NewTabIcon /></CornerButton>
      <Tab $active><Folder />.fluxbox</Tab>
      <Tab><Page />bbpager.rc</Tab>
      <Tab><Folder />.idesktop</Tab>
      <Tab><Page />.ideskrc</Tab>
      <Spacer />
      <CornerButton aria-label="Закрыть вкладку"><CloseTabIcon /></CornerButton>
    </TabStrip>
    <ListFrame>
      <FileTable>
        <colgroup>
          <col /><col width="91" /><col width="120" /><col width="80" /><col width="97" />
        </colgroup>
        <thead>
          <tr>
            <FirstHead><HeadInner>Имя<Chevron /></HeadInner></FirstHead>
            <HeadCell>Размер</HeadCell>
            <HeadCell>Дата</HeadCell>
            <HeadCell>Права досту</HeadCell>
            <HeadCell>Тип</HeadCell>
          </tr>
        </thead>
        <tbody>
          {files.map(([name, kind, size, date, rights, type]) => (
            <Row key={name}>
              <NameCell><FileName>{fileIcon[kind]}{name}</FileName></NameCell>
              <Cell $right>{size}</Cell>
              <Cell>{date}</Cell>
              <Cell>{rights}</Cell>
              <Cell>{type}</Cell>
            </Row>
          ))}
        </tbody>
      </FileTable>
    </ListFrame>
    <StatusBar><Led /><Grip /></StatusBar>
  </Window>
);

const SystemMonitor = () => (
  <Monitor>
    <MonitorTitle>
      <WhiteSquare />
      <svg width="11" height="11" viewBox="0 0 11 11">
        <rect width="11" height="11" fill="#5e6e70" /><path d="M2 9V5l2-3 1 7M6 3h3" stroke="#d4dde0" fill="none" /><circle cx="8" cy="6" r="1.500" fill="#8ac44a" />
      </svg>
      <MonitorName>gkrellm</MonitorName>
      <TitleButton aria-label="Свернуть"><Minimize color="#fff" /></TitleButton>
      <TitleButton aria-label="Закрыть"><Cross color="#fff" /></TitleButton>
    </MonitorTitle>
    <Band />
    <ChartBox $h={113}>
      <svg width="100%" height="112" viewBox="24 84 375 336" preserveAspectRatio="none">
        <path d="M24 166h375M24 250h375M24 337h375" stroke="#000" strokeWidth="3" />
        <path d="M24 169h375M24 253h375M24 340h375" stroke="#717a83" strokeWidth="3" />
        <g fill="none" strokeWidth="3" strokeLinejoin="bevel">
          <path stroke="#dc9a50" d="M24 400l6-38 4-6 6 18 8 2 4 20 6-4 4 8 6-32 3 34 7-24 6 18 4 2 6 14 10-4 6-8 4 6 6-10 5 14 6-16 6 10 6-12 8 10 4-14 6 14 8-6 4-10 6 20 8-6 8 10 6-10 6 8 8 4 8-6 6 4 6-12 6 14 7-48 5 30 6-2 4 10 6-14 4-8 3 30 7 4 6 0 8-8 6 8 8 0 6-12 8 10 6-4 6-12 6 6 8 14 6-8 6 6 6-20 8 16 6-4 8 6 6 2" />
          <path stroke="#30b4b6" d="M24 350v-62h14v38l6-4V155l6-8 4-30 4-8 2 18 5-6 3 3 4-12 8 4 4 12 6-20 5-2 5 6 4-14 6 0 4 12 5-8 6-4 4 14 5 8 4-6 5 6 4-26 5 8 4 34" />
          <path stroke="#05e8ee" d="M88 110l5-8 5-2 5 6 4-12 6 0 4 12 5-6 6 0 4 8 5 8M142 94l5 26 4 30 1 85h6V150l5-8V118l4-20 4 20v70l6 80 1 60 3 34 6-20 4 42 4-8 4 22 6-30 4 20 4-30 4 8 3-10 5-2 4 14 4-4 3 18h2v40h8V270h4l2-168 4-6h4v218h6l3-44 4 44h5v60" />
          <path stroke="#36b8ba" d="M283 370v34l4 6h11l5-32 5 26 4-24 8 0 4-6 6 20 3-60 4 46 4-34 4 26 4 30 6-40 8 20 6-14 4-82h4v48h5l2 72 5 24 6-8V370" />
        </g>
      </svg>
      <CpuText>8%</CpuText>
    </ChartBox>
    <Krell $mark="#9ff0f4" $at={9} />
    <LabelRow><Label>ЦПУ</Label></LabelRow>
    <LabelRow>
      <Sensors>
        {sensors.map(([name, value]) => (
          <React.Fragment key={name}>
            <SensorName>{name}</SensorName>
            <SensorValue>{value}</SensorValue>
          </React.Fragment>
        ))}
      </Sensors>
    </LabelRow>
    <ChartBox $h={113}>
      <Chart h={112} lines={[26, 54, 83, 110]}>
        <BarSet cyan={diskCyan} orange={diskOrange} h={112} />
      </Chart>
    </ChartBox>
    <Krell $mark="#c08ac8" $at={-1} />
    <LabelRow><Label>Диск</Label></LabelRow>
    <ChartBox $h={72}>
      <Chart h={71} lines={[17, 35, 54]}>
        <path d="M4 71V32h1v39M5 71V43h1v28" fill="none" stroke="#36b8b8" />
        <path d="M9.500 70v-3l2-5 2 4 2-4 2 5 1-8h1v11M33.500 70l2-5h4l-2 5h5v-8l2 4 1-5 2 5 2-5 2 4 3 6M69.500 71v-5M76.500 71V58M77.500 71v-9" fill="none" stroke="#18d2d4" />
        <path d={barPath(netOrange, 71)} stroke="#dc9a50" />
        <path d="M0 70.500h125" stroke="#38b8b8" strokeDasharray="5 1" />
      </Chart>
      <ChartText>{'total 120K < 1,9K\nin  27,61M < 1,6K\nout 831,1M < 350'}</ChartText>
    </ChartBox>
    <Krell $mark="#bff4f6" $at={-1} />
    <LabelRow><Label>eth0</Label></LabelRow>
    <ChartBox $h={38}>
      <Chart h={37} lines={[16]}>
        <BarSet cyan={memCyan} orange={memOrange} h={37} />
      </Chart>
      <ChartText>0 / 300</ChartText>
    </ChartBox>
    <MemBox><MemLabel>СЗУ</MemLabel></MemBox>
    <Uptime>{'0d  1:59'}</Uptime>
  </Monitor>
);

const MaximaTaskIcon = () => (
  <svg width="30" height="30" viewBox="0 0 30 30">
    <circle cx="14" cy="16" r="12" fill="#c9dbe8" />
    <path d="M5 12c4-3 6 2 3 5s0 6 4 7M16 7h8l-4 8 4 7" fill="none" stroke="#4b93aa" strokeWidth="1.600" />
    <path d="M7 21h5M9.500 21V11l5 8 5-8v10M17 21h6M7 11h3M19 11h4" fill="none" stroke="#b52b32" strokeWidth="2" />
  </svg>
);
const HelpTaskIcon = () => (
  <svg width="30" height="30" viewBox="0 0 30 30">
    <rect x="1" width="27" height="30" fill="url(#help)" /><path d="M1 0h3v30H1z" fill="#08090b" /><path d="M4 0h3v30H4z" fill="#26303e" /><path d="M5 3h20" stroke="#fff" strokeWidth="2" />
    <path d="M11 13c0-8 10-8 10 0 0 4-5 4-5 9M16 25v3" fill="none" stroke="#fff" strokeWidth="2.600" />
  </svg>
);

const Panel = () => (
  <TaskBar>
    <Pager>
      {pagerWindows.map((wins, i) => (
        <PagerButton key={i} $current={i === 0} aria-label={`Рабочий стол ${i + 1}`}>
          <svg width="40" height="30" viewBox="0 0 40 30">
            {wins.map(([x, y, w, h], n) => (
              <g key={n}>
                <rect x={x + 0.5} y={y + 0.5} width={w} height={h} fill="url(#wood)" stroke="#6b4a30" />
                <path d={`M${x + 0.5} ${y + h}V${y + 0.5}h${w}`} fill="none" stroke="#f4c38a" />
              </g>
            ))}
          </svg>
        </PagerButton>
      ))}
    </Pager>
    <Tasks>
      <Task><Folder size={30} /><TaskText>.fluxbox — Konqueror</TaskText></Task>
      <Task><MaximaTaskIcon /><TaskText>wxMaxima 0.8.4 [ unsav</TaskText></Task>
      <Task><HelpTaskIcon /><TaskText>Help: Maxima 5.20.1 Ma</TaskText></Task>
    </Tasks>
    <Tray>
      <TrayButton aria-label="Буфер обмена">
        <svg width="22" height="22" viewBox="0 0 22 22"><rect x="1" y="2" width="17" height="19" fill="#e9c41a" stroke="#b38d08" /><path d="M4 5h11v14H4z" fill="#fff" /><path d="M5 1h9v4H5z" fill="#9c9c9c" stroke="#ddd" /><path d="M8.500 8.500h12v9l-4 4h-8z" fill="#fafafa" stroke="#bbb" /><path d="M20.500 17.500h-4v4z" fill="#ccc" /></svg>
      </TrayButton>
      <TrayButton aria-label="Сообщения">
        <svg width="22" height="22" viewBox="0 0 22 22"><path d="M11 1c6 0 10 4 10 8s-3 7-7 8l-4 5v-5C4 17 1 13 1 9s4-8 10-8z" fill="url(#sky)" /><path d="M7 8v3M14 6v3M6 13c2 2 5 0 6-3 2 2 4 1 5-1" stroke="#fff" strokeWidth="1.300" fill="none" /></svg>
      </TrayButton>
      <TrayButton aria-label="Сеть">
        <svg width="22" height="22" viewBox="0 0 22 22"><circle cx="11" cy="11" r="10.500" fill="url(#navy)" /><path d="M15 7c-3-4-8-1-8 4s5 6 8 3" fill="none" stroke="#93a8e0" strokeWidth="2" /><path d="M3 8l4-5 3 1M4 15l4 4 3-1M17 4l2 4" fill="none" stroke="#7f95d2" strokeWidth="1.500" /></svg>
      </TrayButton>
      <TrayButton aria-label="Раскладка: US">
        <svg width="21" height="14" viewBox="0 0 21 14"><rect width="21" height="14" fill="#fff" /><path d="M0 .5h21M0 2.500h21M0 4.500h21M0 6.500h21M0 8.500h21M0 10.500h21M0 12.500h21" stroke="#f01818" /><path d="M0 0h8v7H0z" fill="#18188c" /><path d="M1 1.500h7M1 3.500h7M1 5.500h7" stroke="#cfd0f4" strokeDasharray="1 1" /></svg>
      </TrayButton>
      <TrayButton aria-label="Громкость">
        <svg width="28" height="28" viewBox="0 0 28 28"><path d="M1 10h5v8H1z" fill="#888" /><path d="M5 9L16 1h3v26h-3L5 19z" fill="url(#metal)" /><rect x="4" y="9" width="4" height="10" fill="#f8b828" /><path d="M21 10q3 4 0 8M24 6q5 8 0 16" fill="none" stroke="#44b21c" strokeWidth="1.800" /></svg>
      </TrayButton>
      <TrayButton aria-label="Бумажник">
        <svg width="32" height="32" viewBox="0 0 32 32"><path d="M4 5h24v8H4z" fill="#c9c9c9" /><path d="M7 12l2-7 7-4 13 11z" fill="#222" /><path d="M6 8l5 4M10 4l9 8M14 2l12 9" stroke="#f4f4f4" strokeWidth="1.800" fill="none" /><path d="M2 11h29v19l-28-1z" fill="url(#wallet)" stroke="#5a2e0c" /><path d="M1 15h6c3 0 3 6 0 6H1z" fill="#8e5126" stroke="#5a2e0c" /><circle cx="5" cy="18" r="2" fill="#f3c034" /></svg>
      </TrayButton>
      <Clock>03:29</Clock>
    </Tray>
  </TaskBar>
);

export default function App() {
  return (
    <>
      <GlobalStyle />
      <Defs />
      <Desktop>
        <IconBar>
          <DesktopButton aria-label="Документ"><Document /></DesktopButton>
          <IconGroup>
            {desktopIcons.map(({ name, art }) => (
              <DesktopButton key={name} aria-label={name}><Art>{art}</Art></DesktopButton>
            ))}
          </IconGroup>
        </IconBar>
        <FileManager />
        <SystemMonitor />
        <Panel />
      </Desktop>
    </>
  );
}
